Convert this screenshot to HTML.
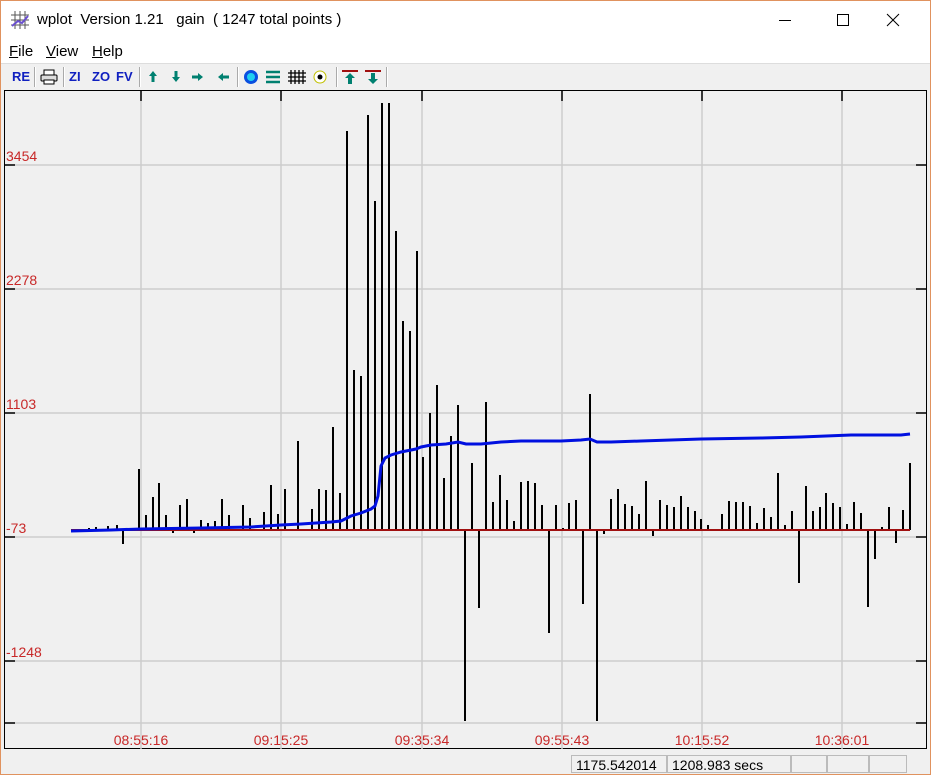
<!DOCTYPE html>
<html><head><meta charset="utf-8"><style>
body{margin:0;width:931px;height:775px;overflow:hidden;background:#fff;font-family:"Liberation Sans",sans-serif;position:relative}
.win{position:absolute;left:0;top:0;width:929px;height:773px;border:1px solid #e0925e;background:#f0f0f0}
.title{position:absolute;left:0;top:0;width:929px;height:38px;background:#fff}
.title .t{position:absolute;left:36px;top:10px;font-size:15px;color:#000}
.menu{position:absolute;left:0;top:38px;width:929px;height:24px;background:#fff;font-size:15px}
.menu span{position:absolute;top:4px}
.tb{position:absolute;left:0;top:62px;width:929px;height:26px;background:#f0f0f0;border-top:1px solid #ddd}
.tb b{position:absolute;top:5px;font-size:13px;color:#1020c0;font-weight:bold}
.sep{position:absolute;top:3px;width:1px;height:20px;background:#aaa;border-right:1px solid #fff}
.status{position:absolute;left:0;top:752px;width:929px;height:21px;background:#f0f0f0}
.cell{position:absolute;top:2px;height:18px;border:1px solid #bbb;font-size:14px;line-height:18px;padding-left:4px;box-sizing:border-box}
</style></head><body><div class="win">
<div class="title">
<svg style="position:absolute;left:9px;top:9px" width="20" height="20"><g stroke="#555" stroke-width="1"><path d="M5 1V19M10 1V19M15 1V19M1 5H19M1 10H19M1 15H19"/></g><path d="M2 16L8 11L12 13L18 6" stroke="#6a4fd0" stroke-width="2" fill="none"/></svg>
<span class="t">wplot&nbsp; Version 1.21 &nbsp; gain &nbsp;( 1247 total points )</span>
<svg style="position:absolute;left:776px;top:12px" width="150" height="16"><path d="M2 7.5H14" stroke="#000"/><rect x="60.5" y="1.5" width="11" height="11" fill="none" stroke="#000"/><path d="M110 1L122 13M122 1L110 13" stroke="#000"/></svg>
</div>
<div class="menu"><span style="left:8px"><u>F</u>ile</span><span style="left:45px"><u>V</u>iew</span><span style="left:91px"><u>H</u>elp</span></div>
<div class="tb">
<b style="left:11px">RE</b><div class="sep" style="left:33px"></div>
<svg style="position:absolute;left:39px;top:5px" width="18" height="16"><rect x="4" y="1" width="10" height="5" fill="#fff" stroke="#000"/><rect x="1" y="6" width="16" height="6" rx="1" fill="#ddd" stroke="#000"/><rect x="4" y="11" width="10" height="4" fill="#fff" stroke="#000"/></svg>
<div class="sep" style="left:62px"></div>
<b style="left:68px">ZI</b><b style="left:91px">ZO</b><b style="left:115px">FV</b><div class="sep" style="left:138px"></div>
<svg style="position:absolute;left:145px;top:5px" width="90" height="16" fill="#008070"><path d="M7 2L11 7H8.5V13H5.5V7H3Z"/><path d="M30 13L34 8H31.5V2H28.5V8H26Z"/><path d="M57 8L52 4V6.5H46V9.5H52V12Z"/><path d="M72 8L77 4V6.5H83V9.5H77V12Z"/></svg>
<div class="sep" style="left:236px"></div>
<svg style="position:absolute;left:242px;top:4px" width="90" height="18"><circle cx="8" cy="9" r="7" fill="#0a4fe0"/><circle cx="8" cy="9" r="4" fill="#20d0f0"/><path d="M23 4H37M23 9H37M23 14H37" stroke="#008070" stroke-width="2.5"/><path d="M48 2V16M52 2V16M56 2V16M60 2V16M45 5H63M45 9H63M45 13H63" stroke="#000" stroke-width="1.3"/><circle cx="77" cy="9" r="6" fill="#fff" stroke="#c0c000"/><circle cx="77" cy="9" r="2.5" fill="#000"/></svg>
<div class="sep" style="left:335px"></div>
<svg style="position:absolute;left:340px;top:4px" width="42" height="18"><path d="M1 3H17M24 3H40" stroke="#a01010" stroke-width="2"/><path d="M9 5L14 10H11V16H7V10H4Z" fill="#008070"/><path d="M32 16L37 11H34V5H30V11H27Z" fill="#008070"/></svg>
<div class="sep" style="left:385px"></div>
</div>
<svg style="position:absolute;left:2px;top:88px" width="926" height="662" font-family="Liberation Sans" font-size="14" fill="#c82828">
<rect x="1.5" y="1.5" width="922" height="658" fill="#f0f0f0" stroke="#000" stroke-width="1"/>
<g stroke="#cdcdcd" stroke-width="1.5"><path d="M138 2V660M278 2V660M419 2V660M559 2V660M699 2V660M839 2V660M2 76H923M2 200H923M2 324H923M2 448H923M2 572H923M2 634H923"/></g>
<g stroke="#000" stroke-width="1.5"><path d="M138 2V12M278 2V12M419 2V12M559 2V12M699 2V12M839 2V12M2 76H12M2 200H12M2 324H12M2 448H12M2 572H12M2 634H12M913 76H923M913 200H923M913 324H923M913 448H923M913 572H923M913 634H923"/></g>
<text x="3" y="72">3454</text><text x="3" y="196">2278</text><text x="3" y="320">1103</text><text x="3" y="444">-73</text><text x="3" y="568">-1248</text>
<g text-anchor="middle"><text x="138" y="656">08:55:16</text><text x="278" y="656">09:15:25</text><text x="419" y="656">09:35:34</text><text x="559" y="656">09:55:43</text><text x="699" y="656">10:15:52</text><text x="839" y="656">10:36:01</text></g>
<g transform="translate(-2,-88)" stroke="#000" stroke-width="2" fill="none">
<path d="M88 529V527M95 529V526M107 529V525M116 529V524M122 529V543M128 529V527M138 529V468M145 529V514M152 529V496M158 529V482M165 529V514M172 529V532M179 529V504M186 529V498M193 529V532M200 529V519M207 529V522M214 529V520M221 529V498M228 529V514M242 529V504M249 529V517M263 529V511M270 529V484M277 529V513M284 529V488M297 529V440M311 529V508M318 529V488M325 529V489M332 529V426M339 529V492M346 529V130M353 529V369M360 529V375M367 529V114M374 529V200M381 529V102M388 529V102M395 529V230M402 529V320M409 529V330M416 529V250M422 529V456M429 529V412M436 529V384M443 529V477M450 529V435M457 529V404M464 529V720M471 529V462M478 529V607M485 529V401M492 529V501M499 529V474M506 529V499M513 529V520M520 529V481M527 529V480M534 529V482M541 529V504M548 529V632M555 529V504M562 529V527M568 529V502M575 529V499M582 529V603M589 529V393M596 529V720M603 529V533M610 529V498M617 529V488M624 529V503M631 529V505M638 529V513M645 529V480M652 529V535M659 529V499M666 529V504M673 529V506M680 529V495M687 529V506M694 529V510M700 529V518M707 529V524M721 529V513M728 529V500M735 529V501M742 529V501M749 529V505M756 529V522M763 529V507M770 529V516M777 529V472M784 529V524M791 529V510M798 529V582M805 529V485M812 529V510M819 529V506M825 529V492M832 529V502M839 529V506M846 529V523M853 529V501M860 529V512M867 529V606M874 529V558M881 529V526M888 529V506M895 529V542M902 529V509M909 529V462"/>
<path d="M70 529H909" stroke="#a01010" stroke-width="2"/>
<polyline stroke="#0010e0" stroke-width="3" points="70,530 110,529 140,528 200,527 250,526 280,524 300,523 330,521 340,520 350,515 360,512 370,508 374,505 377,495 380,465 384,457 390,454 400,451 415,448 420,446 430,444 445,443 457,441 465,443 480,443 500,441 520,440 540,440 560,440 580,439 589,438 596,441 610,441 640,440 700,438 760,437 800,436 850,434 900,434 909,433"/>
</g>
</svg>
<div class="status">
<div class="cell" style="left:570px;width:96px">1175.542014</div>
<div class="cell" style="left:666px;width:124px">1208.983 secs</div>
<div class="cell" style="left:790px;width:36px"></div>
<div class="cell" style="left:826px;width:42px"></div>
<div class="cell" style="left:868px;width:38px"></div>
</div>
</div></body></html>
